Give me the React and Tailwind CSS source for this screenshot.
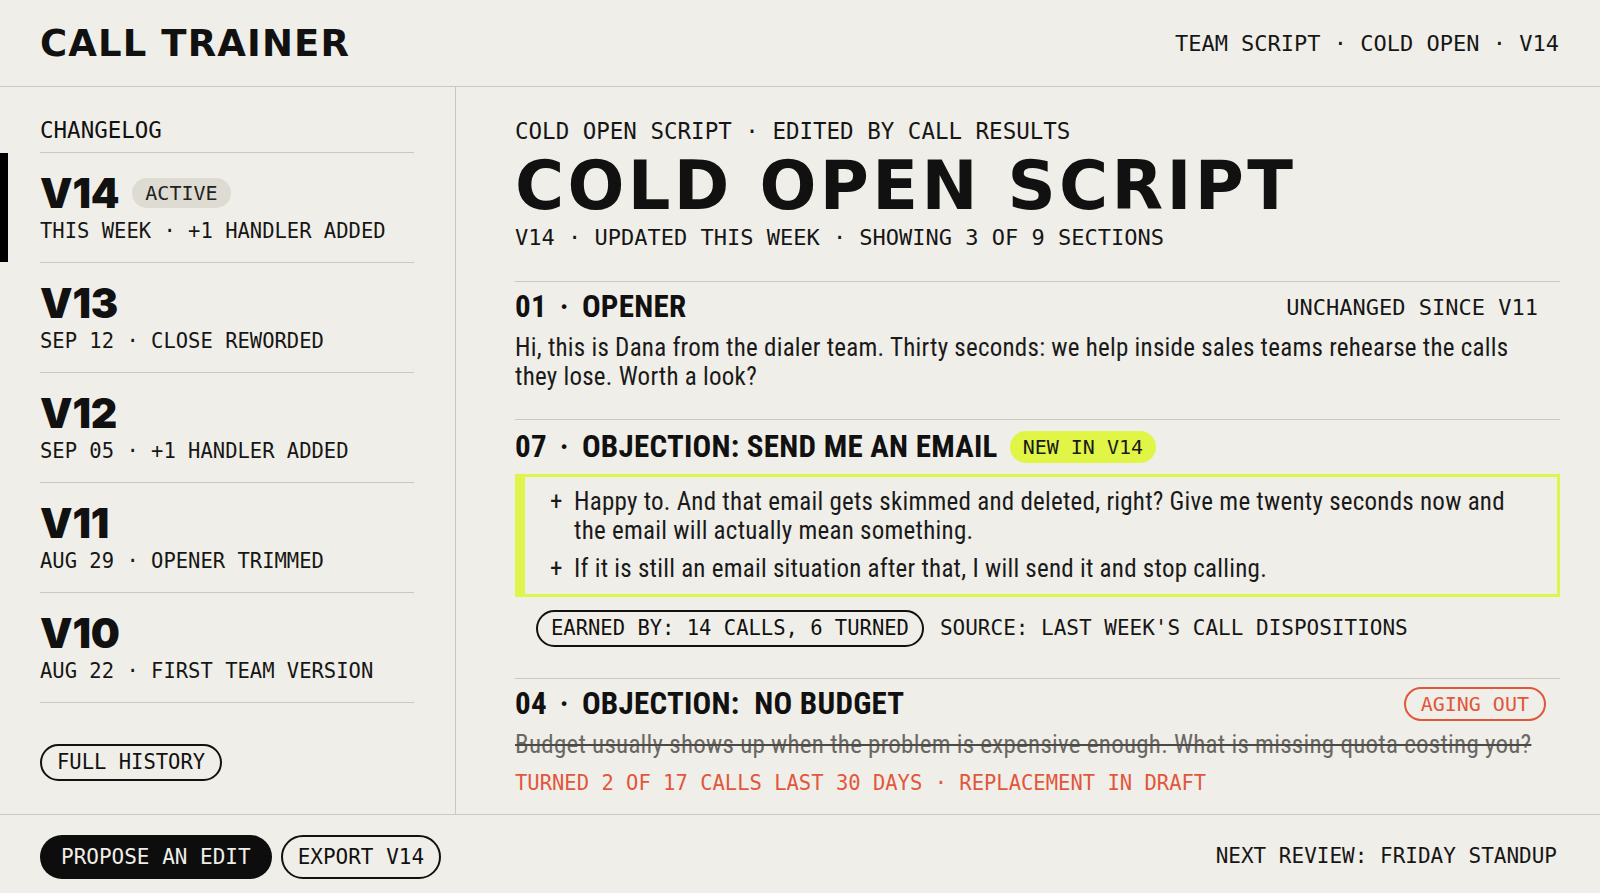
import React from 'react';

const mono = 'font-["DejaVu_Sans_Mono","Liberation_Mono",monospace]';
const narrow = 'font-["Liberation_Sans_Narrow","Roboto_Condensed","Roboto",sans-serif]';
const display = 'font-["Inter","Liberation_Sans",sans-serif]';
const wide = 'font-["DejaVu_Sans","Inter",sans-serif]';

const versions = [
  { v: 'V14', note: 'THIS WEEK · +1 HANDLER ADDED', active: true },
  { v: 'V13', note: 'SEP 12 · CLOSE REWORDED' },
  { v: 'V12', note: 'SEP 05 · +1 HANDLER ADDED' },
  { v: 'V11', note: 'AUG 29 · OPENER TRIMMED' },
  { v: 'V10', note: 'AUG 22 · FIRST TEAM VERSION' },
];

function VersionItem({ item }) {
  return (
    <div className="relative border-b border-[#cbc8bf] pt-[20px] pb-[18px]">
      {item.active && <div className="absolute -left-10 top-0 bottom-0 w-[8px] bg-black" />}
      <div className="flex items-center h-[40px] gap-[13px]">
        <span className={`${display} text-[41px] leading-none font-black tracking-[-0.005em]`}>{item.v}</span>
        {item.active && (
          <span className={`${mono} text-[20px] leading-[30px] h-[30px] px-[13px] rounded-full bg-[#dedbd3] text-[#222]`}>
            ACTIVE
          </span>
        )}
      </div>
      <div className={`${mono} text-[20.5px] leading-[26px] mt-[5px] text-[#161616]`}>{item.note}</div>
    </div>
  );
}

const heading = `${narrow} font-bold text-[31px] leading-[32px] tracking-[0.008em] flex items-center gap-[13px]`;

function SectionHead({ children, right, pr }) {
  return (
    <div className={`flex items-center justify-between h-[32px] ${pr}`}>
      <div className={heading}>{children}</div>
      {right}
    </div>
  );
}

const body = `${narrow} text-[25px] leading-[29px] tracking-[0.01em]`;

export default function App() {
  return (
    <div className="w-[1600px] h-[893px] bg-[#f0eee8] text-[#111] flex flex-col overflow-hidden">
      <header className="h-[87px] shrink-0 border-b border-[#cbc8bf] flex items-center justify-between pl-10 pr-[41px]">
        <h1 className={`${wide} text-[37px] font-bold leading-none tracking-[0.03em]`}>CALL TRAINER</h1>
        <div className={`${mono} text-[22px] text-[#161616]`}>TEAM SCRIPT · COLD OPEN · V14</div>
      </header>

      <div className="flex flex-1 min-h-0">
        <aside className="w-[456px] shrink-0 border-r border-[#cbc8bf] pl-10 pr-[41px] pt-[29px]">
          <div className={`${mono} text-[22.5px] leading-[28px] pb-2 border-b border-[#cbc8bf]`}>CHANGELOG</div>
          {versions.map((item) => (
            <VersionItem key={item.v} item={item} />
          ))}
          <button
            className={`${mono} mt-[41px] h-[37px] px-[15px] rounded-full border-2 border-[#111] text-[20.5px] leading-none`}
          >
            FULL HISTORY
          </button>
        </aside>

        <main className="flex-1 pl-[59px] pr-10 pt-[30px]">
          <div className={`${mono} text-[22.5px] leading-[28px] text-[#161616]`}>COLD OPEN SCRIPT · EDITED BY CALL RESULTS</div>
          <h2 className={`${wide} mt-[6px] text-[67px] leading-[70px] font-bold tracking-[0.05em]`}>COLD OPEN SCRIPT</h2>
          <div className={`${mono} mt-[3px] text-[22px] leading-[28px] text-[#161616]`}>
            V14 · UPDATED THIS WEEK · SHOWING 3 OF 9 SECTIONS
          </div>

          <section className="mt-[29px] border-t border-[#cbc8bf] pt-[9px] pb-[28px]">
            <SectionHead
              pr="pr-[22px]"
              right={<span className={`${mono} text-[22px] text-[#161616]`}>UNCHANGED SINCE V11</span>}
            >
              <span>01</span>
              <span>·</span>
              <span>OPENER</span>
            </SectionHead>
            <p className={`${body} mt-[10px] pr-[24px] text-[#1a1a1a]`}>
              Hi, this is Dana from the dialer team. Thirty seconds: we help inside sales teams rehearse the calls they lose.
              Worth a look?
            </p>
          </section>

          <section className="border-t border-[#cbc8bf] pt-[11px] pb-[31px]">
            <div className="flex items-center h-[32px] gap-[12px]">
              <div className={heading}>
                <span>07</span>
                <span>·</span>
                <span>OBJECTION: SEND ME AN EMAIL</span>
              </div>
              <span className={`${mono} h-[32px] leading-[32px] px-[13px] rounded-full bg-[#e0f545] text-[20px] text-[#1a1a1a]`}>
                NEW IN V14
              </span>
            </div>
            <div className="mt-[11px] border-[3px] border-l-[10px] border-[#dff54c] pl-[25px] pr-[30px] pt-[10px] pb-[11px] flex flex-col gap-[9px]">
              <div className={`${body} flex text-[#1a1a1a]`}>
                <span className="w-[24px] shrink-0">+</span>
                <span>
                  Happy to. And that email gets skimmed and deleted, right? Give me twenty seconds now and the email will actually
                  mean something.
                </span>
              </div>
              <div className={`${body} flex text-[#1a1a1a]`}>
                <span className="w-[24px] shrink-0">+</span>
                <span>If it is still an email situation after that, I will send it and stop calling.</span>
              </div>
            </div>
            <div className="mt-[13px] pl-[21px] flex items-center gap-[16px]">
              <span className={`${mono} h-[37px] flex items-center px-[13px] rounded-full border-2 border-[#111] text-[20.5px]`}>
                EARNED BY: 14 CALLS, 6 TURNED
              </span>
              <span className={`${mono} text-[21px] text-[#161616]`}>SOURCE: LAST WEEK'S CALL DISPOSITIONS</span>
            </div>
          </section>

          <section className="border-t border-[#cbc8bf] pt-[9px]">
            <SectionHead
              pr="pr-[14px]"
              right={
                <span className={`${mono} h-[34px] flex items-center px-[15px] rounded-full border-2 border-[#e0573c] text-[20px] text-[#e0573c]`}>
                  AGING OUT
                </span>
              }
            >
              <span>04</span>
              <span>·</span>
              <span>OBJECTION:&nbsp; NO BUDGET</span>
            </SectionHead>
            <p className={`${body} mt-[10px] text-[#6a6864] line-through decoration-[#4a4946]`}>
              Budget usually shows up when the problem is expensive enough. What is missing quota costing you?
            </p>
            <div className={`${mono} mt-[10px] text-[20.5px] leading-[28px] text-[#e0573c]`}>
              TURNED 2 OF 17 CALLS LAST 30 DAYS · REPLACEMENT IN DRAFT
            </div>
          </section>
        </main>
      </div>

      <footer className="h-[79px] shrink-0 border-t border-[#cbc8bf] flex items-center justify-between pl-10 pr-[43px] pt-[6px]">
        <div className="flex items-center gap-[9px]">
          <button className={`${mono} h-[44px] px-[21px] rounded-full bg-[#0d0d0d] text-[#f0eee8] text-[21px] leading-none`}>
            PROPOSE AN EDIT
          </button>
          <button className={`${mono} h-[44px] px-[15px] rounded-full border-2 border-[#111] text-[21px] leading-none`}>
            EXPORT V14
          </button>
        </div>
        <div className={`${mono} text-[21px] text-[#161616]`}>NEXT REVIEW: FRIDAY STANDUP</div>
      </footer>
    </div>
  );
}
